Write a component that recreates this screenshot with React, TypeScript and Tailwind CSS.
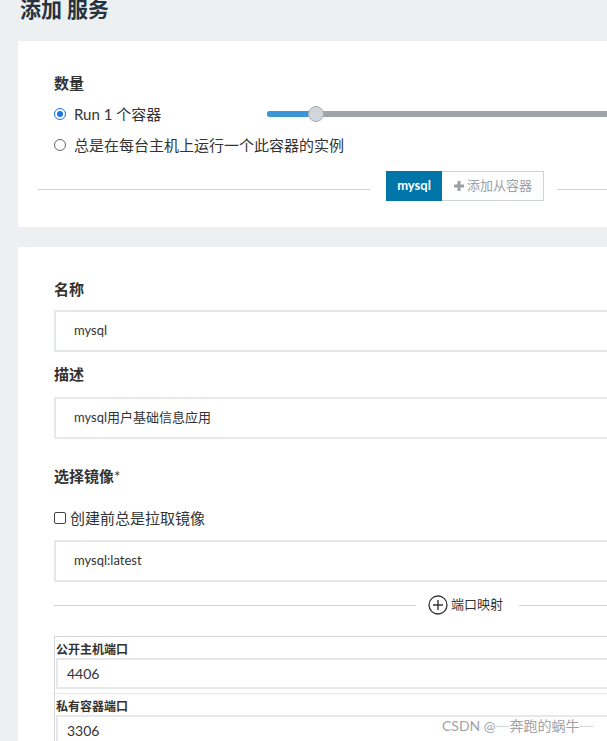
import React from 'react';

const font = { fontFamily: '"Lato", "Noto Sans CJK SC", sans-serif' };

const Field: React.FC<{ value: string }> = ({ value }) => (
  <div className="h-[42px] border-2 border-[#e6e9eb] bg-white flex items-center pl-[18px] text-[13px] text-[#333]">
    {value}
  </div>
);

const Label: React.FC<{ children: React.ReactNode; className?: string }> = ({ children, className = '' }) => (
  <div className={`h-5 leading-5 text-[15px] font-bold text-[#333] ${className}`}>{children}</div>
);

export default function App() {
  return (
    <div className="w-[607px] h-[741px] overflow-hidden bg-[#edf0f1] relative" style={font}>
      <div className="h-[41px] pl-5 flex items-start">
        <h1 className="text-[21px] leading-[18px] font-bold text-[#263340]">添加 服务</h1>
      </div>

      {/* 数量 */}
      <div className="ml-[18px] w-[900px] bg-white pt-8 pb-[26px]">
        <div className="pl-9">
          <Label>数量</Label>
          <div className="mt-[11px] flex items-center h-5">
            <div className="w-[213px] flex items-center gap-2 text-[15px] text-[#333]">
              <span className="w-3 h-3 rounded-full border-[1.5px] border-[#1a73e8] flex items-center justify-center">
                <span className="w-[6px] h-[6px] rounded-full bg-[#1a73e8]" />
              </span>
              <span>Run 1 个容器</span>
            </div>
            <div className="relative flex-1 h-[6px] rounded-full bg-[#9ea4a7]">
              <div className="absolute left-0 top-0 h-[6px] w-[50px] rounded-full bg-[#3a96d6]" />
              <div className="absolute left-[41px] top-[-5px] w-4 h-4 rounded-full bg-[#d2d6da] border border-[#a7adb1]" />
            </div>
          </div>
          <div className="mt-[11px] flex items-center gap-2 h-5 text-[15px] text-[#333]">
            <span className="w-3 h-3 rounded-full border border-[#666]" />
            <span>总是在每台主机上运行一个此容器的实例</span>
          </div>
        </div>
        <div className="mt-4 flex items-center">
          <div className="ml-5 mt-[6px] w-[332px] h-px bg-[#cfd3d6]" />
          <div className="ml-4 flex h-[30px]">
            <div className="w-[56px] bg-[#0076a8] text-white text-[13px] font-bold flex items-center justify-center">
              mysql
            </div>
            <div className="w-[102px] border border-[#cfd4d7] border-l-0 flex items-center justify-center gap-[2px] text-[13px] text-[#9aa1a6]">
              <svg width="12" height="12" viewBox="0 0 12 12">
                <path d="M6 1v10M1 6h10" stroke="#9aa1a6" strokeWidth="3" />
              </svg>
              <span>添加从容器</span>
            </div>
          </div>
          <div className="ml-[13px] mt-[6px] flex-1 h-px bg-[#cfd3d6]" />
        </div>
      </div>

      {/* 表单 */}
      <div className="ml-[18px] mt-5 w-[900px] bg-white pt-8 pl-9 pb-10">
        <Label>名称</Label>
        <div className="mt-[11px]"><Field value="mysql" /></div>
        <Label className="mt-3">描述</Label>
        <div className="mt-[13px]"><Field value="mysql用户基础信息应用" /></div>
        <Label className="mt-[27px]">选择镜像<span className="font-normal">*</span></Label>
        <div className="mt-[22px] h-5 flex items-center gap-1 text-[15px] text-[#333]">
          <span className="w-3 h-3 rounded-[2px] border border-[#444]" />
          <span>创建前总是拉取镜像</span>
        </div>
        <div className="mt-3"><Field value="mysql:latest" /></div>
        <div className="mt-[13px] h-5 flex items-center w-[553px]">
          <div className="w-[362px] h-px bg-[#cfd3d6]" />
          <div className="ml-3 flex items-center gap-[3px] text-[13px] text-[#333]">
            <svg width="20" height="20" viewBox="0 0 20 20">
              <circle cx="10" cy="10" r="9" fill="none" stroke="#333" strokeWidth="1.3" />
              <path d="M10 5v10M5 10h10" stroke="#333" strokeWidth="1.4" />
            </svg>
            <span>端口映射</span>
          </div>
          <div className="ml-4 flex-1 h-px bg-[#cfd3d6]" />
        </div>
        <div className="mt-[21px] border-t border-l border-[#d4d7da] pt-[5px]">
          <div className="pl-px h-[16px] leading-[16px] text-[12px] font-bold text-[#333]">公开主机端口</div>
          <div className="ml-[1px] h-[31px] border-2 border-[#e6e9eb] flex items-center pl-[9px] text-[14px] text-[#333]">
            4406
          </div>
          <div className="mt-1 h-px bg-[#e6e9eb]" />
          <div className="mt-[5px] pl-px h-[16px] leading-[16px] text-[12px] font-bold text-[#333]">私有容器端口</div>
          <div className="ml-[1px] h-[31px] border-2 border-[#e6e9eb] flex items-center pl-[9px] text-[14px] text-[#333]">
            3306
          </div>
        </div>
      </div>

      <div className="absolute left-[442px] top-[715px] text-[14px] text-[#9fa3a6] whitespace-nowrap">
        CSDN @┈奔跑的蜗牛┈
      </div>
    </div>
  );
}
